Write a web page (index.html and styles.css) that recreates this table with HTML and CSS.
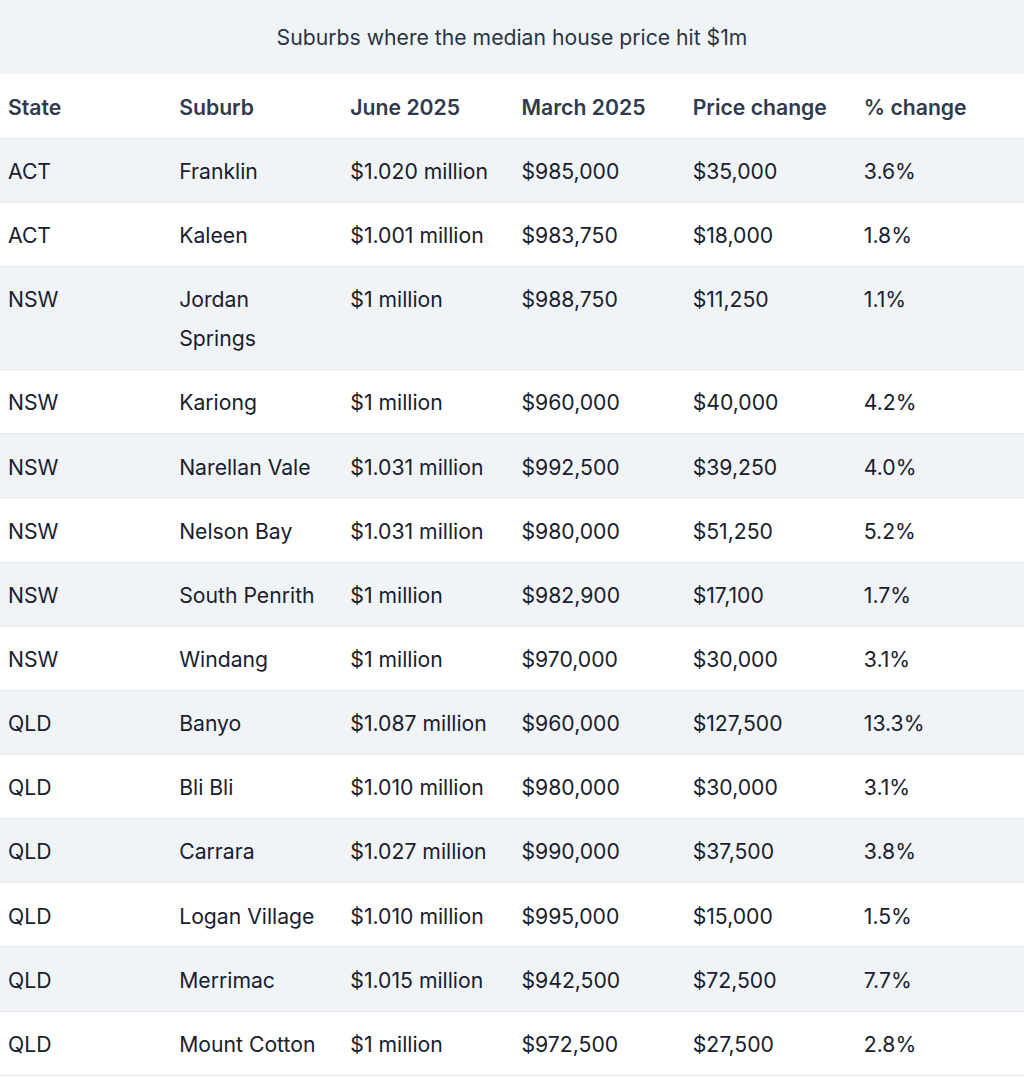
FILE: index.html
```html
<!DOCTYPE html>
<html>
<head>
<meta charset="utf-8">
<link rel="stylesheet" href="styles.css">
</head>
<body>
<table class="data">
<caption class="cap">Suburbs where the median house price hit $1m</caption>
<thead>
<tr><th>State</th><th>Suburb</th><th>June 2025</th><th>March 2025</th><th>Price change</th><th>% change</th></tr>
</thead>
<tbody>
<tr><td>ACT</td><td>Franklin</td><td>$1.020 million</td><td>$985,000</td><td>$35,000</td><td>3.6%</td></tr>
<tr><td>ACT</td><td>Kaleen</td><td>$1.001 million</td><td>$983,750</td><td>$18,000</td><td>1.8%</td></tr>
<tr><td>NSW</td><td>Jordan Springs</td><td>$1 million</td><td>$988,750</td><td>$11,250</td><td>1.1%</td></tr>
<tr><td>NSW</td><td>Kariong</td><td>$1 million</td><td>$960,000</td><td>$40,000</td><td>4.2%</td></tr>
<tr><td>NSW</td><td>Narellan Vale</td><td>$1.031 million</td><td>$992,500</td><td>$39,250</td><td>4.0%</td></tr>
<tr><td>NSW</td><td>Nelson Bay</td><td>$1.031 million</td><td>$980,000</td><td>$51,250</td><td>5.2%</td></tr>
<tr><td>NSW</td><td>South Penrith</td><td>$1 million</td><td>$982,900</td><td>$17,100</td><td>1.7%</td></tr>
<tr><td>NSW</td><td>Windang</td><td>$1 million</td><td>$970,000</td><td>$30,000</td><td>3.1%</td></tr>
<tr><td>QLD</td><td>Banyo</td><td>$1.087 million</td><td>$960,000</td><td>$127,500</td><td>13.3%</td></tr>
<tr><td>QLD</td><td>Bli Bli</td><td>$1.010 million</td><td>$980,000</td><td>$30,000</td><td>3.1%</td></tr>
<tr><td>QLD</td><td>Carrara</td><td>$1.027 million</td><td>$990,000</td><td>$37,500</td><td>3.8%</td></tr>
<tr><td>QLD</td><td>Logan Village</td><td>$1.010 million</td><td>$995,000</td><td>$15,000</td><td>1.5%</td></tr>
<tr><td>QLD</td><td>Merrimac</td><td>$1.015 million</td><td>$942,500</td><td>$72,500</td><td>7.7%</td></tr>
<tr><td>QLD</td><td>Mount Cotton</td><td>$1 million</td><td>$972,500</td><td>$27,500</td><td>2.8%</td></tr>
</tbody>
</table>
</body>
</html>
```
FILE: styles.css
```css
html, body {
  margin: 0;
  padding: 0;
  background: #ffffff;
}
body {
  font-family: Inter, "Liberation Sans", sans-serif;
  font-size: 21.2px;
  color: #18202f;
  overflow: hidden;
}
.data {
  width: 1027px;
  border-collapse: collapse;
  table-layout: fixed;
}
.cap {
  background: #f1f4f7;
  height: 74px;
  line-height: 74px;
  text-align: center;
  color: #2a3445;
  font-size: 21.2px;
  caption-side: top;
  padding-right: 3px;
}
.data th, .data td {
  text-align: left;
  vertical-align: top;
  padding: 13.3px 16px 11px 8px;
  line-height: 38.85px;
  border-bottom: 1px solid #e4e8ee;
}
.data th {
  font-weight: 600;
  color: #2f3a4f;
  padding-top: 14px;
  padding-bottom: 11px;
}
.data tbody tr:nth-child(odd) {
  background: #f1f4f7;
}
```
